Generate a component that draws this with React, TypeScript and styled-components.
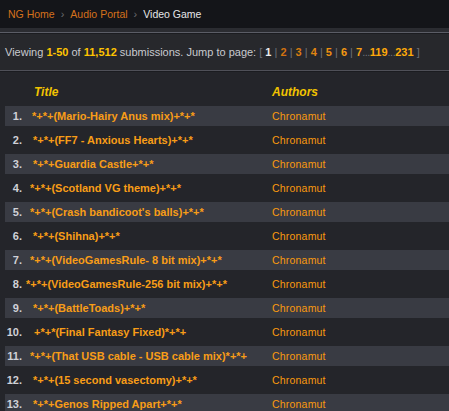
import React from "react";
import styled, { createGlobalStyle } from "styled-components";

interface Submission {
	title: string;
	author: string;
	indent: number;
}

const GlobalStyle = createGlobalStyle`
	html, body {
		margin: 0;
		padding: 0;
		background: #24252a;
		font-family: "Liberation Sans", Arial, sans-serif;
	}
`;

const Page = styled.div`
	width: 449px;
	height: 411px;
	overflow: hidden;
	background: #24252a;
`;

const Breadcrumbs = styled.nav`
	height: 28px;
	background: #141519;
	display: flex;
	align-items: center;
	gap: 6px;
	padding: 0 8px;
	font-size: 10.5px;
`;

const Crumb = styled.span<{ $current?: boolean }>`
	color: ${(p) => (p.$current ? "#e6e6e8" : "#d5711b")};
`;

const Chevron = styled.span`
	color: #6a6b70;
	font-size: 11px;
`;

const Band = styled.div`
	height: 4px;
	background: #2b2c31;
	border-bottom: 1px solid #5b5d66;
	box-shadow: 0 1px 0 #1b1c20;
`;

const InfoBar = styled.div`
	height: 36px;
	margin-top: 1px;
	background: #27282c;
	border-bottom: 1px solid #4f5058;
	display: flex;
	align-items: center;
	padding: 0 5px;
	font-size: 11px;
	color: #c9cacf;
`;

const InfoText = styled.p`
	margin: 0;
	white-space: pre;
`;

const Strong = styled.b`
	color: #ffc400;
`;

const PageLink = styled.b<{ $color: string }>`
	color: ${(p) => p.$color};
`;

const Muted = styled.span`
	color: #6e7078;
`;

const Dots = styled.span`
	color: #6e7078;
	letter-spacing: -0.5px;
`;

const Table = styled.div`
	display: flex;
	flex-direction: column;
	gap: 4px;
	padding: 10px 0 0 5px;
	border-top: 1px solid #1b1c20;
`;

const Row = styled.div<{ $striped?: boolean }>`
	height: 20px;
	display: grid;
	grid-template-columns: 19px 248px 1fr;
	align-items: center;
	background: ${(p) => (p.$striped ? "#393b43" : "transparent")};
`;

const HeadCell = styled.span<{ $col: number }>`
	grid-column: ${(p) => p.$col};
	color: #f2c300;
	font-weight: bold;
	font-style: italic;
	font-size: 12px;
	padding-left: ${(p) => (p.$col === 2 ? "10px" : "0")};
`;

const Num = styled.span`
	text-align: right;
	padding-right: 2px;
	color: #d0d1d7;
	font-weight: bold;
	font-size: 11px;
`;

const Title = styled.span<{ $indent: number }>`
	padding-left: ${(p) => p.$indent}px;
	color: #f89d17;
	font-weight: bold;
	font-size: 11px;
	white-space: nowrap;
`;

const Author = styled.span`
	color: #fa9a0e;
	font-size: 10.5px;
	letter-spacing: 0.2px;
`;

const pages: [string, string][] = [
	["2", "#d2720f"],
	["3", "#d97c10"],
	["4", "#e08511"],
	["5", "#ec8f10"],
	["6", "#f39812"],
];

const submissions: Submission[] = [
	{ title: "*+*+(Mario-Hairy Anus mix)+*+*", author: "Chronamut", indent: 8 },
	{ title: "*+*+(FF7 - Anxious Hearts)+*+*", author: "Chronamut", indent: 9 },
	{ title: "*+*+Guardia Castle+*+*", author: "Chronamut", indent: 9 },
	{ title: "*+*+(Scotland VG theme)+*+*", author: "Chronamut", indent: 6 },
	{ title: "*+*+(Crash bandicoot's balls)+*+*", author: "Chronamut", indent: 6 },
	{ title: "*+*+(Shihna)+*+*", author: "Chronamut", indent: 9 },
	{ title: "*+*+(VideoGamesRule- 8 bit mix)+*+*", author: "Chronamut", indent: 6 },
	{ title: "*+*+(VideoGamesRule-256 bit mix)+*+*", author: "Chronamut", indent: 2 },
	{ title: "*+*+(BattleToads)+*+*", author: "Chronamut", indent: 9 },
	{ title: "+*+*(Final Fantasy Fixed)*+*+", author: "Chronamut", indent: 10 },
	{ title: "*+*+(That USB cable - USB cable mix)*+*+", author: "Chronamut", indent: 6 },
	{ title: "*+*+(15 second vasectomy)+*+*", author: "Chronamut", indent: 9 },
	{ title: "*+*+Genos Ripped Apart+*+*", author: "Chronamut", indent: 9 },
];

export default function App() {
	return (
		<Page>
			<GlobalStyle />
			<Breadcrumbs>
				<Crumb>NG Home</Crumb>
				<Chevron>›</Chevron>
				<Crumb>Audio Portal</Crumb>
				<Chevron>›</Chevron>
				<Crumb $current>Video Game</Crumb>
			</Breadcrumbs>
			<Band />
			<InfoBar>
				<InfoText>
					Viewing <Strong>1-50</Strong> of <Strong>11,512</Strong> submissions. Jump to page:{" "}
					<Muted>[</Muted> <PageLink $color="#ececee">1</PageLink>
					{pages.map(([n, c]) => (
						<React.Fragment key={n}>
							{" "}
							<Muted>|</Muted> <PageLink $color={c}>{n}</PageLink>
						</React.Fragment>
					))}{" "}
					<Muted>|</Muted> <PageLink $color="#f9a012">7</PageLink>
					<Dots>...</Dots>
					<PageLink $color="#ffa80a">119</PageLink>
					<Dots>...</Dots>
					<PageLink $color="#ffab08">231</PageLink> <Muted>]</Muted>
				</InfoText>
			</InfoBar>
			<Table>
				<Row>
					<HeadCell $col={2}>Title</HeadCell>
					<HeadCell $col={3}>Authors</HeadCell>
				</Row>
				{submissions.map((s, i) => (
					<Row $striped={i % 2 === 0} key={`SUB_${i}`}>
						<Num>{i + 1}.</Num>
						<Title $indent={s.indent}>{s.title}</Title>
						<Author>{s.author}</Author>
					</Row>
				))}
			</Table>
		</Page>
	);
}
